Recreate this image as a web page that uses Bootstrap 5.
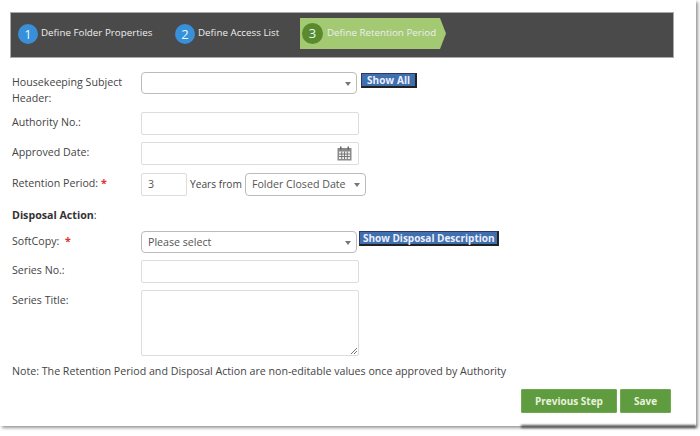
<!DOCTYPE html>
<html><head><meta charset="utf-8">
<link rel="stylesheet" href="https://cdn.jsdelivr.net/npm/bootstrap@5.3.0/dist/css/bootstrap.min.css">
<style>
html,body{background:#fff;margin:0;height:436px;overflow:hidden}
body{font-family:"Open Sans","Noto Sans",sans-serif;font-size:10.65px;color:#444}
.frame{position:relative;width:696px;height:426px;background:#fff;padding:12px 22px 0 10px;box-shadow:2px 2px 3px #999}
.frame::after{content:"";position:absolute;left:521px;right:0;bottom:-2px;height:3px;background:#555;filter:blur(1px)}
.stepbar{height:46px;background:#4a4a4a;border:1px solid #aaa;padding:0 0 3px 7px}
.stepitem{color:#eee;gap:3px;height:31px;white-space:nowrap;font-size:9.8px}
.stepitem.s1{width:157px}.stepitem.s2{width:125px}
.stepnum{width:20px;height:20px;border-radius:50%;background:#3a8fd9;font-size:13px;color:#dff;line-height:20px;text-align:center}
.stepitem.on{background:#a3c973;padding-left:2px;gap:4px;clip-path:polygon(0 0,140px 0,146px 50%,140px 100%,0 100%);width:147px}
.stepitem.on .stepnum{width:21px;height:21px;background:#5a8a2c;line-height:21px}
.fbody{padding:14px 0 0 2px}
.frow{display:flex;align-items:flex-start}
.flabel{width:129px;flex:none;line-height:16px;color:#444;padding-top:2px}
.req{color:#e03030;font-weight:700}
.fctl{width:218px;height:23px;border:1px solid #ddd;border-radius:2px;background:#fff;padding:0 6px;line-height:21px;color:#555;position:relative;flex:none}
.fctl.sel{width:216px;height:22px;border-color:#bbb;border-radius:4px}
.fctl.sel::after,.smsel::after{content:"";position:absolute;right:5px;top:9px;border:3.5px solid transparent;border-top:4px solid #777;border-bottom:0}
.numbox{width:46px;flex:none}
.yfrom{margin:1px 3px 0;line-height:21px;font-size:10.2px}
.smsel{width:121px;height:23px;border:1px solid #bbb;border-radius:4px;padding:0 6px;line-height:21px;position:relative;color:#555;flex:none;white-space:nowrap}
.bluebtn{background:#3f70ae;color:#eef;font-weight:700;border:1px solid #222;border-left-color:#336;border-top-color:#336;border-width:1px 2px 2px 1px;height:15px;line-height:12px;font-size:10px;white-space:nowrap;border-radius:0}
.bluebtn.wideb{padding:0 5px;margin:1px 0 0 4px;letter-spacing:.1px}
.bluebtn.tightb{padding:0 2px 0 3px;margin-left:2px}
.calsvg{position:absolute;right:6px;top:3px}
.tarea{height:66px}
.tarea svg{position:absolute;right:1px;bottom:1px}
.gbtn{background:#5f9c3f;color:#e8f2dc;font-weight:700;font-size:10px;height:24px;padding:0;border:1px solid #6fa850;border-radius:1px;line-height:22px}
.gbtn:hover{background:#5f9c3f;color:#e8f2dc}
.gbtn.prev{width:96px}.gbtn.sv{width:51px}
.r1{margin-bottom:6px}.r2{margin-bottom:7px}.r3{margin-bottom:8px}
.disp{font-weight:700;color:#333;line-height:16px;margin:11px 0 8px}
.disp span{font-weight:400}
.noteline{margin-top:7px;line-height:16px}
.btnrow{margin-top:10px;padding-right:3px;gap:3px}
</style></head>
<body>
<div class="frame">
 <div class="stepbar d-flex align-items-center">
  <div class="stepitem s1 d-flex align-items-center"><span class="stepnum">1</span><span>Define Folder Properties</span></div>
  <div class="stepitem s2 d-flex align-items-center"><span class="stepnum">2</span><span>Define Access List</span></div>
  <div class="stepitem on d-flex align-items-center"><span class="stepnum">3</span><span>Define Retention Period</span></div>
 </div>
 <div class="fbody">
  <div class="frow r1"><div class="flabel">Housekeeping Subject Header:</div><div class="fctl sel"></div><button class="bluebtn wideb">Show All</button></div>
  <div class="frow r2"><div class="flabel">Authority No.:</div><div class="fctl"></div></div>
  <div class="frow r3"><div class="flabel">Approved Date:</div><div class="fctl">
   <svg class="calsvg" width="15" height="15" viewBox="0 0 15 15"><rect x="0.5" y="2" width="14" height="12.5" fill="#8a8a8a"/><rect x="3" y="0.5" width="1.5" height="3" fill="#666"/><rect x="10.5" y="0.5" width="1.5" height="3" fill="#666"/><rect x="2" y="5.5" width="11" height="7.5" fill="#eee"/><path d="M2 8h11M2 10.5h11M4.7 5.5v7.5M7.5 5.5v7.5M10.3 5.5v7.5" stroke="#777" stroke-width="1"/></svg></div></div>
  <div class="frow"><div class="flabel">Retention Period: <span class="req">*</span></div><div class="fctl numbox">3</div><span class="yfrom">Years from</span><div class="smsel">Folder Closed Date</div></div>
  <div class="disp">Disposal Action<span>:</span></div>
  <div class="frow r2"><div class="flabel">SoftCopy: &nbsp;<span class="req">*</span></div><div class="fctl sel">Please select</div><button class="bluebtn tightb">Show Disposal Description</button></div>
  <div class="frow r2"><div class="flabel">Series No.:</div><div class="fctl"></div></div>
  <div class="frow"><div class="flabel">Series Title:</div><div class="fctl tarea"><svg width="7" height="7" viewBox="0 0 7 7"><path d="M1 7l6-6M4 7l3-3" stroke="#777"/></svg></div></div>
  <div class="noteline">Note: The Retention Period and Disposal Action are non-editable values once approved by Authority</div>
  <div class="btnrow d-flex justify-content-end"><button class="btn gbtn prev">Previous Step</button><button class="btn gbtn sv">Save</button></div>
 </div>
</div>
<script src="https://cdn.jsdelivr.net/npm/bootstrap@5.3.0/dist/js/bootstrap.bundle.min.js"></script>
</body></html>
